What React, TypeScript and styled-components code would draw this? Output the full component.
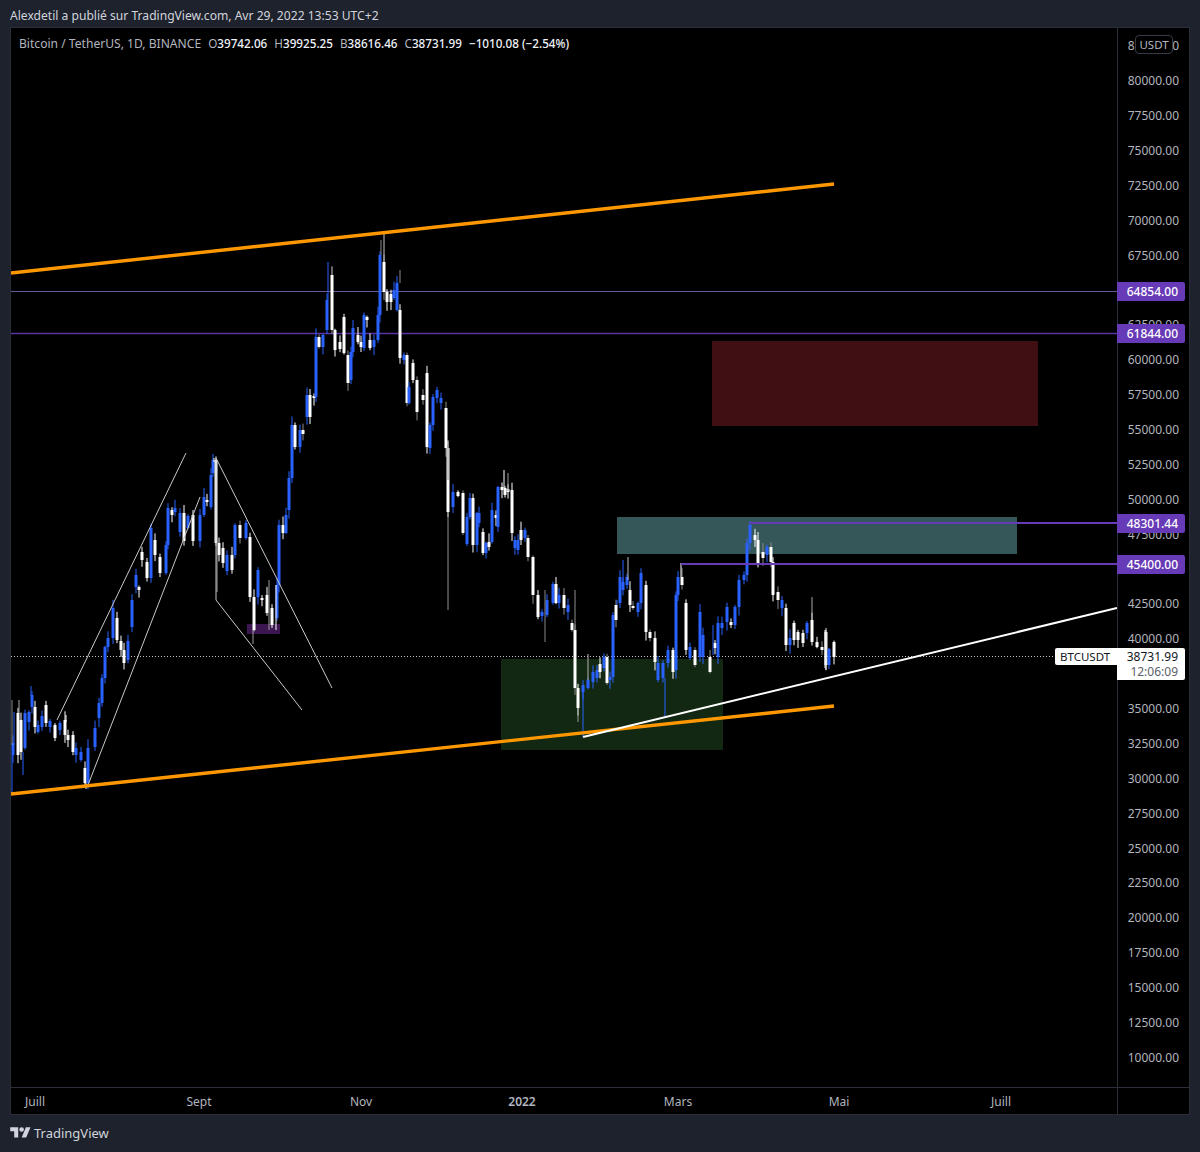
import React from 'react';
import styled, { createGlobalStyle } from 'styled-components';

const chartFont = `'Noto Sans', 'Open Sans', 'Liberation Sans', sans-serif`;
const blue = '#2962ff';
const white = '#ffffff';

const GlobalStyle = createGlobalStyle`
  html, body {
    margin: 0;
    padding: 0;
    background: #1e222d;
  }
`;

// x, top, bottom, 1 = blue candle (picture coordinates)
const bodies: [number, number, number, number][] = [
  [13, 743, 755, 1], [18, 713, 755, 0], [21, 720, 752, 0], [25, 713, 748, 1], [29, 712, 722, 1], [32, 695, 707, 1],
  [35, 707, 727, 0], [38, 725, 732, 1], [42, 716, 727, 1], [46, 705, 723, 0], [50, 721, 727, 1], [55, 725, 738, 0],
  [60, 723, 730, 1], [65, 720, 735, 0], [68, 735, 740, 0], [73, 735, 752, 0], [76, 748, 755, 1], [81, 752, 760, 1],
  [85, 768, 783, 0], [88, 748, 783, 1], [95, 728, 747, 1], [99, 703, 718, 1], [102, 678, 703, 1], [105, 647, 678, 1],
  [108, 638, 647, 1], [113, 608, 638, 1], [117, 618, 640, 0], [121, 641, 650, 0], [124, 650, 663, 0], [128, 641, 660, 1],
  [132, 600, 627, 1], [136, 575, 587, 1], [139, 587, 590, 0], [142, 552, 560, 0], [147, 562, 578, 0], [151, 528, 578, 1],
  [155, 540, 555, 0], [160, 557, 573, 0], [166, 545, 573, 1], [168, 508, 545, 1], [172, 510, 515, 0], [175, 508, 512, 1],
  [180, 513, 532, 1], [184, 513, 541, 0], [188, 516, 528, 1], [193, 515, 541, 0], [200, 515, 541, 1], [204, 497, 515, 1],
  [207, 500, 502, 0], [211, 475, 507, 1], [213, 460, 473, 1], [216, 460, 543, 0], [219, 543, 555, 0], [223, 548, 563, 0],
  [227, 555, 571, 1], [232, 555, 570, 0], [235, 525, 555, 1], [240, 525, 538, 0], [246, 523, 538, 1], [250, 537, 597, 0],
  [254, 597, 630, 0], [258, 570, 597, 1], [262, 598, 600, 0], [267, 595, 613, 0], [272, 608, 625, 0], [277, 585, 618, 1],
  [279, 525, 585, 1], [283, 525, 533, 0], [286, 515, 533, 1], [289, 478, 510, 1], [292, 425, 478, 1], [295, 425, 447, 0],
  [300, 430, 447, 1], [303, 430, 434, 0], [307, 395, 417, 1], [310, 395, 417, 0], [314, 396, 398, 0], [316, 337, 397, 1],
  [319, 337, 347, 0], [323, 335, 347, 1], [327, 300, 330, 1], [332, 275, 330, 0], [335, 330, 350, 0], [340, 342, 349, 0],
  [344, 317, 353, 0], [348, 355, 383, 0], [351, 352, 380, 1], [353, 328, 352, 1], [358, 335, 342, 0], [361, 342, 347, 0],
  [364, 315, 348, 1], [367, 317, 320, 0], [370, 340, 348, 0], [374, 340, 347, 1], [378, 315, 340, 1], [380, 255, 315, 1],
  [384, 262, 292, 0], [387, 292, 302, 0], [391, 294, 302, 0], [394, 290, 298, 1], [397, 283, 310, 1], [400, 310, 358, 0],
  [404, 355, 360, 1], [407, 355, 403, 0], [409, 387, 403, 1], [413, 363, 380, 0], [417, 380, 412, 0], [423, 395, 400, 0],
  [427, 373, 447, 0], [430, 425, 448, 1], [433, 397, 425, 1], [437, 390, 398, 1], [441, 398, 403, 1], [446, 408, 448, 0],
  [448, 448, 512, 0], [453, 492, 507, 1], [458, 492, 496, 0], [463, 493, 533, 0], [467, 517, 544, 1], [470, 498, 517, 1],
  [473, 498, 545, 0], [477, 513, 545, 1], [479, 513, 523, 1], [483, 532, 553, 0], [486, 543, 553, 1], [489, 542, 547, 0],
  [492, 510, 542, 1], [496, 515, 518, 0], [498, 487, 527, 1], [502, 487, 490, 0], [505, 488, 495, 0], [508, 489, 492, 0],
  [512, 490, 533, 0], [515, 540, 548, 1], [518, 540, 550, 1], [521, 530, 540, 0], [525, 530, 538, 1], [528, 538, 557, 0],
  [533, 557, 595, 0], [538, 595, 617, 0], [542, 612, 616, 1], [547, 600, 615, 1], [553, 584, 603, 1], [556, 584, 603, 0],
  [559, 595, 603, 1], [564, 595, 608, 0], [568, 605, 612, 1], [572, 623, 630, 0], [575, 630, 688, 0], [578, 688, 708, 0],
  [583, 685, 692, 1], [588, 680, 688, 1], [593, 672, 682, 1], [597, 670, 678, 1], [600, 664, 672, 0], [604, 657, 668, 1],
  [607, 657, 683, 0], [610, 677, 680, 1], [613, 615, 677, 1], [616, 605, 620, 0], [620, 577, 603, 1], [623, 582, 590, 1],
  [627, 577, 585, 1], [630, 590, 605, 0], [633, 606, 608, 0], [638, 603, 612, 1], [641, 573, 603, 1], [646, 585, 632, 0],
  [650, 632, 638, 0], [655, 638, 662, 0], [658, 663, 680, 1], [663, 663, 678, 1], [668, 650, 663, 1], [673, 650, 672, 0],
  [676, 595, 670, 1], [678, 577, 595, 1], [682, 577, 585, 0], [686, 603, 650, 0], [690, 647, 658, 1], [695, 650, 665, 0],
  [700, 612, 657, 1], [703, 635, 657, 1], [710, 657, 672, 0], [715, 643, 648, 0], [718, 623, 657, 1], [722, 623, 628, 1],
  [727, 607, 622, 1], [731, 622, 625, 0], [735, 607, 625, 1], [739, 580, 607, 1], [744, 575, 580, 1], [747, 543, 575, 1],
  [750, 525, 543, 1], [755, 535, 540, 0], [758, 540, 563, 0], [763, 552, 558, 0], [767, 547, 555, 1], [771, 547, 562, 0],
  [773, 562, 595, 0], [778, 592, 600, 0], [782, 600, 608, 1], [786, 608, 645, 0], [790, 638, 645, 1], [794, 623, 640, 0],
  [798, 632, 640, 0], [803, 633, 643, 0], [807, 623, 633, 1], [812, 620, 642, 0], [817, 642, 647, 0], [822, 647, 650, 0],
  [826, 632, 665, 0], [829, 649, 665, 1], [834, 642, 657, 0],
];

// hand-placed long wicks: x, top, bottom, colour
const longWicks: [number, number, number, string][] = [
  [12, 700, 745, '#8a8a8a'], [12, 755, 793, blue], [14, 712, 745, blue], [19, 700, 713, '#b0b0b0'], [31, 686, 696, blue],
  [23, 752, 775, blue], [86, 783, 789, white], [66, 715, 722, white], [214, 458, 462, white], [217, 543, 592, '#9a9a9a'],
  [253, 630, 644, '#9a9a9a'], [269, 580, 630, '#9a9a9a'], [276, 585, 630, white], [448, 512, 610, '#8f8f8f'],
  [384, 232, 262, '#c8c8c8'], [381, 240, 255, '#8a8a8a'], [400, 270, 283, '#8a8a8a'], [328, 262, 300, blue],
  [332, 266, 275, '#8a8a8a'], [448, 445, 480, '#8a8a8a'], [504, 470, 488, white], [508, 473, 491, '#9a9a9a'],
  [575, 590, 630, '#8f8f8f'], [578, 708, 722, '#9a9a9a'], [583, 692, 737, blue], [588, 654, 680, '#b5b5b5'],
  [665, 678, 717, blue], [628, 557, 580, '#c0c0c0'], [681, 563, 577, white], [812, 597, 620, '#a8a8a8'],
  [826, 628, 670, '#d8d8d8'], [545, 590, 642, '#888888'], [825, 630, 668, white],
  [713, 625, 655, blue], [617, 600, 605, blue], [623, 560, 585, blue],
];

const seeded = (n: number) => {
  const v = Math.sin(n * 91.7 + 3.1) * 43758.5453;
  return v - Math.floor(v);
};

const priceTicks = Array.from({ length: 30 }, (_, i) => (82500 - i * 2500).toFixed(2));
const months: [string, number][] = [
  ['Juill', 164],
  ['Sept', 162],
  ['Nov', 161],
  ['2022', 156],
  ['Mars', 161],
  ['Mai', 162],
  ['Juill', 60],
];
const priceTags: [string, number][] = [
  ['64854.00', 282],
  ['61844.00', 324],
  ['48301.44', 514],
  ['45400.00', 555],
];

const Candles = () => (
  <g>
    {bodies.map(([x, top, bottom, up], i) => {
      const color = up ? blue : white;
      const wick = !up && seeded(i) < 0.3 ? '#8c8c8c' : color;
      const wickTop = top - 1 - seeded(i + 400) * 8;
      const wickBottom = bottom + 1 + seeded(i + 800) * 8;
      return (
        <g key={i}>
          <line x1={x} x2={x} y1={wickTop} y2={wickBottom} stroke={wick} strokeWidth={1} />
          <rect x={x - 1.5} y={top} width={3} height={Math.max(bottom - top, 1)} fill={color} />
        </g>
      );
    })}
    {longWicks.map(([x, top, bottom, color], i) => (
      <line key={i} x1={x} x2={x} y1={top} y2={bottom} stroke={color} strokeWidth={1} />
    ))}
  </g>
);

const ChartDrawing = () => (
  <PlotSvg viewBox="11 28 1106 1059" width={1106} height={1059}>
    <rect x={712} y={341} width={326} height={85} fill="#3f0f14" />
    <rect x={617} y={517} width={400} height={37} fill="#365759" />
    <rect x={501} y={659} width={222} height={91} fill="#132813" />
    <rect x={247} y={624} width={33} height={10} fill="#3b1650" />
    <line x1={11} x2={1117} y1={291.5} y2={291.5} stroke="#6a5a9a" strokeWidth={1} />
    <line x1={11} x2={1117} y1={333.5} y2={333.5} stroke="#5a33a3" strokeWidth={1.4} />
    <line x1={11} x2={1055} y1={656.5} y2={656.5} stroke="#c4c4c4" strokeWidth={1} strokeDasharray="1 2" />
    <Candles />
    <line x1={750} x2={1117} y1={523} y2={523} stroke="#673ab7" strokeWidth={2} />
    <line x1={681} x2={1117} y1={564} y2={564} stroke="#673ab7" strokeWidth={2} />
    <g stroke="#c9c9c9" strokeWidth={1} fill="none">
      <line x1={57} y1={720} x2={186} y2={453} />
      <line x1={88} y1={785} x2={200} y2={497} />
      <line x1={216} y1={458} x2={332} y2={688} />
      <polyline points="216,458 216,600 302,710" />
    </g>
    <g stroke="#ff9800" strokeWidth={3.4}>
      <line x1={11} y1={273} x2={834} y2={184} />
      <line x1={11} y1={794} x2={834} y2={706} />
    </g>
    <line x1={583} y1={737} x2={1117} y2={608} stroke="#ffffff" strokeWidth={2} />
  </PlotSvg>
);

const TvLogo = () => (
  <svg viewBox="0 0 36 28" width={21} height={16} fill="#d1d4dc">
    <path d="M14 22H7V11H0V4h14v18zM28 22h-8l7.5-18h8L28 22z" />
    <circle cx={20} cy={8} r={4} />
  </svg>
);

export default function App() {
  return (
    <Page>
      <GlobalStyle />
      <Published>Alexdetil a publié sur TradingView.com, Avr 29, 2022 13:53 UTC+2</Published>
      <Frame>
        <Plot>
          <ChartDrawing />
          <Legend>
            <LegendTitle>Bitcoin / TetherUS, 1D, BINANCE</LegendTitle>
            <LegendValue><i>O</i>39742.06</LegendValue>
            <LegendValue><i>H</i>39925.25</LegendValue>
            <LegendValue><i>B</i>38616.46</LegendValue>
            <LegendValue><i>C</i>38731.99</LegendValue>
            <LegendValue>−1010.08 (−2.54%)</LegendValue>
          </Legend>
        </Plot>
        <PriceAxis>
          {priceTicks.map((tick) => (
            <PriceTick key={tick}>{tick}</PriceTick>
          ))}
          <CurrencyButton>USDT</CurrencyButton>
          {priceTags.map(([label, top]) => (
            <PriceTag key={label} $top={top}>{label}</PriceTag>
          ))}
          <LastPrice>
            <span>38731.99</span>
            <small>12:06:09</small>
          </LastPrice>
          <SymbolTag>BTCUSDT</SymbolTag>
        </PriceAxis>
        <TimeAxis>
          {months.map(([label, step], i) => (
            <MonthLabel key={i} $step={step} $strong={label === '2022'}>
              <span>{label}</span>
            </MonthLabel>
          ))}
        </TimeAxis>
        <AxisCorner />
      </Frame>
      <Footer>
        <TvLogo />
        <Wordmark>TradingView</Wordmark>
      </Footer>
    </Page>
  );
}

const Page = styled.div`
  width: 1200px;
  height: 1152px;
  overflow: hidden;
  background: #1e222d;
  font-family: ${chartFont};
`;

const Published = styled.div`
  height: 27px;
  padding: 8px 0 0 10px;
  box-sizing: border-box;
  font-size: 12.1px;
  line-height: 15px;
  color: #d1d4dc;
  white-space: nowrap;
`;

const Frame = styled.div`
  display: grid;
  grid-template-columns: 1106px 72px;
  grid-template-rows: 1060px 26px;
  width: 1178px;
  margin-left: 10px;
  border: 1px solid #2a2e39;
  background: #000;
`;

const Plot = styled.div`
  position: relative;
  overflow: hidden;
  border-bottom: 1px solid #2a2e39;
`;

const PlotSvg = styled.svg`
  display: block;
`;

const Legend = styled.div`
  position: absolute;
  top: 7px;
  left: 8px;
  display: flex;
  gap: 7px;
  font-size: 12.1px;
  line-height: 17px;
  white-space: nowrap;
`;

const LegendTitle = styled.span`
  color: #b2b5be;
`;

const LegendValue = styled.span`
  color: #f0f3fa;
  font-size: 11.7px;
  font-weight: 500;

  i {
    font-style: normal;
    font-weight: 400;
    color: #b2b5be;
  }
`;

const PriceAxis = styled.div`
  position: relative;
  display: flex;
  flex-direction: column;
  padding-top: 0.5px;
  border-left: 1px solid #2a2e39;
  border-bottom: 1px solid #2a2e39;
`;

const PriceTick = styled.div`
  flex: 0 0 34.89px;
  display: flex;
  align-items: center;
  justify-content: flex-end;
  padding-right: 10px;
  font-size: 12px;
  color: #b2b5be;
`;

const CurrencyButton = styled.div`
  position: absolute;
  top: 7px;
  left: 17px;
  width: 38px;
  height: 19px;
  box-sizing: border-box;
  border: 1px solid #363a45;
  border-radius: 4px;
  background: #000;
  font-size: 11.5px;
  line-height: 17px;
  text-align: center;
  color: #b2b5be;
`;

const PriceTag = styled.div<{ $top: number }>`
  position: absolute;
  top: ${(p) => p.$top - 28}px;
  left: -1px;
  width: 68px;
  height: 19px;
  box-sizing: border-box;
  padding-right: 7px;
  border-radius: 0 2px 2px 0;
  background: #673ab7;
  font-size: 12px;
  font-weight: 500;
  line-height: 19px;
  text-align: right;
  color: #fff;
`;

const LastPrice = styled.div`
  position: absolute;
  top: 620px;
  left: -1px;
  width: 68px;
  height: 32px;
  box-sizing: border-box;
  padding: 1px 7px 0 0;
  border-radius: 0 2px 2px 0;
  background: #fff;
  font-size: 12px;
  line-height: 15px;
  text-align: right;
  color: #131722;

  span,
  small {
    display: block;
  }

  small {
    font-size: 12px;
    color: #5d606b;
  }
`;

const SymbolTag = styled.div`
  position: absolute;
  top: 620px;
  left: -63px;
  width: 62px;
  height: 17px;
  box-sizing: border-box;
  padding-left: 5px;
  border-radius: 2px 0 0 2px;
  background: #fff;
  font-size: 11.5px;
  line-height: 17px;
  color: #131722;
`;

const TimeAxis = styled.div`
  display: flex;
  align-items: center;
  padding-left: 24px;
  overflow: hidden;
`;

const MonthLabel = styled.div<{ $step: number; $strong: boolean }>`
  flex: 0 0 ${(p) => p.$step}px;
  font-size: 12px;
  font-weight: ${(p) => (p.$strong ? 600 : 400)};
  color: #b2b5be;
  white-space: nowrap;

  span {
    display: inline-block;
    transform: translateX(-50%);
  }
`;

const AxisCorner = styled.div`
  border-left: 1px solid #2a2e39;
`;

const Footer = styled.div`
  display: flex;
  align-items: center;
  gap: 3px;
  height: 36px;
  padding-left: 10px;
`;

const Wordmark = styled.span`
  font-size: 13px;
  color: #d1d4dc;
`;
